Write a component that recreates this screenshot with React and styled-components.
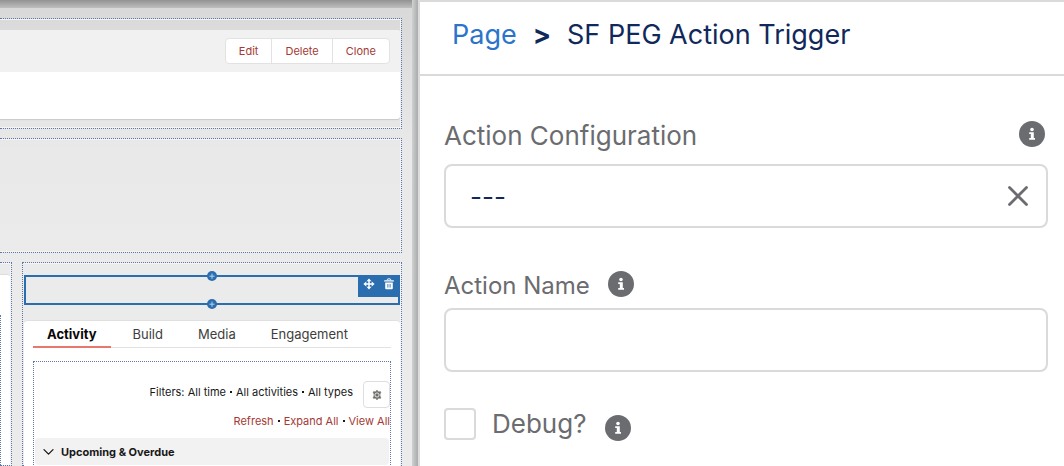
import React from "react";
import styled, { createGlobalStyle, css } from "styled-components";

const GlobalStyle = createGlobalStyle`
  *, *::before, *::after { box-sizing: border-box; }
  body { margin: 0; background: #fff; }
  body, button, input { font-family: Inter, "Liberation Sans", sans-serif; }
  button { margin: 0; padding: 0; border: 0; background: none; cursor: pointer; }
`;

const Builder = styled.div`
  display: grid;
  grid-template-columns: minmax(0, 420fr) minmax(0, 644fr);
  height: 100vh;
  overflow: hidden;
`;

/* ---------- Canvas ---------- */

const Canvas = styled.main`
  display: flex;
  flex-direction: column;
  gap: 9px;
  min-width: 0;
  overflow: hidden;
  padding: 18px 16px 0 0;
  border-right: 2px solid #dcdcdc;
  background:
    linear-gradient(to right, #d0d0d1, #a9abad) right / 6px 100% no-repeat,
    linear-gradient(to bottom, #929294, #bfbfc0) top / 100% 8px no-repeat,
    linear-gradient(to bottom, #d8d8d8, #e9e9e9 150px, #ebebeb 260px);
`;

const Region = styled.section`
  border: 1px dotted #5f78a8;
  box-shadow: inset -1px 0 #f4f4f4, inset 0 1px #f4f4f4, inset 0 -1px #f4f4f4;
  padding: ${(p) => p.$padding || "1px"};
  min-width: 0;
  ${(p) => p.$bleedLeft && css`border-left: 0;`}
  ${(p) => p.$minHeight && css`min-height: ${p.$minHeight};`}
  ${(p) => p.$grow && css`flex: 1; display: flex; flex-direction: column;`}
`;

const RecordCard = styled.article`
  border-radius: 0 3px 3px 0;
  background: #fff;
  box-shadow: 0 1px 1px #c9c9c9;
  overflow: hidden;
  min-height: 89px;
`;

const RecordHeader = styled.header`
  display: flex;
  justify-content: flex-end;
  padding: 8px 10px;
  background: #f1f1f1;
`;

const ButtonGroup = styled.div`
  display: flex;
  border: 1px solid #e2e2e2;
  border-radius: 4px;
  background: #fff;
`;

const GroupButton = styled.button`
  height: 24px;
  padding: 0 13px;
  color: #a43a35;
  font-size: 11px;
  line-height: 16px;
  & + & { border-left: 1px solid #e2e2e2; }
`;

const Columns = styled.div`
  display: flex;
  flex: 1;
  gap: 10px;
  min-height: 0;
`;

const SideRegion = styled(Region)`
  flex: 0 0 12px;
  display: flex;
`;

const SideCard = styled.div`
  flex: 1;
  border-radius: 0 3px 0 0;
  border-top: 1px solid #dedede;
  padding-top: 40px;
  background: #fff;
`;

const SideInner = styled.div`
  width: 1px;
  height: 100%;
  border-left: 1px dotted #5f78a8;
`;

const Selected = styled.div`
  position: relative;
  display: flex;
  flex: none;
  justify-content: flex-end;
  height: 30px;
  margin-bottom: 15px;
  border: 2px solid #2a6eb0;
`;

const AddButton = styled.button`
  position: absolute;
  left: 50%;
  ${(p) => p.$edge}: -6px;
  display: flex;
  width: 10px;
  height: 10px;
  margin-left: -5px;
  border-radius: 50%;
  background: #2a6eb0;
`;

const ComponentTools = styled.div`
  display: flex;
  align-items: flex-start;
  justify-content: space-between;
  width: 40px;
  height: 20px;
  padding: 1px 3px 0 5px;
  background: #2a6eb0;
  & button { display: flex; }
`;

const TabsCard = styled.div`
  border-top: 1px solid #e0e0e0;
  border-radius: 4px 4px 0 0;
  background: #fff;
  padding: 0 9px;
  flex: 1;
`;

const TabList = styled.div`
  display: flex;
  border-bottom: 1px solid #e2e2e2;
`;

const Tab = styled.button`
  height: 27px;
  margin-bottom: -1px;
  padding: 0 ${(p) => (p.$active ? "14px" : "0")};
  margin-right: ${(p) => (p.$active ? "22px" : "35px")};
  border-bottom: 2px solid ${(p) => (p.$active ? "#e6786c" : "transparent")};
  color: ${(p) => (p.$active ? "#080707" : "#3e3e3c")};
  font-size: 13px;
  font-weight: ${(p) => (p.$active ? 700 : 400)};
  white-space: nowrap;
`;

const ActivityRegion = styled.div`
  margin-top: 13px;
  border: 1px dotted #5f78a8;
  padding: 19px 0 1px 1px;
`;

const FilterRow = styled.div`
  display: flex;
  align-items: flex-start;
  justify-content: flex-end;
  gap: 10px;
  white-space: nowrap;
  color: #181818;
  font-size: 11px;
  line-height: 22px;
`;

const FilterList = styled.ul`
  display: flex;
  margin: 0;
  padding: 0;
  list-style: none;
`;

const Dot = styled.span`
  align-self: center;
  flex: none;
  width: 2px;
  height: 2px;
  margin: 0 4px;
  background: #181818;
`;

const Filter = styled.li`
  display: flex;
`;

const GearButton = styled.button`
  display: flex;
  align-items: center;
  justify-content: center;
  width: 27px;
  height: 27px;
  border: 1px solid #dedede;
  border-radius: 4px;
`;

const LinkRow = styled.nav`
  display: flex;
  justify-content: flex-end;
  margin-top: 5px;
  font-size: 11px;
  line-height: 16px;
  white-space: nowrap;
`;

const ActionLink = styled.a`
  color: #a43a35;
  text-decoration: none;
`;

const SectionToggle = styled.button`
  display: flex;
  align-items: center;
  gap: 7px;
  width: calc(100% - 1px);
  height: 27px;
  margin-top: 9px;
  padding: 0 8px;
  border-radius: 4px;
  background: #f2f2f2;
  color: #181818;
  font-size: 11px;
  font-weight: 700;
`;

/* ---------- Property panel ---------- */

const Panel = styled.aside`
  min-width: 0;
  border-top: 2px solid #dadada;
  background: #fff;
`;

const Breadcrumb = styled.header`
  display: flex;
  align-items: center;
  gap: 16px;
  height: 74px;
  padding: 0 32px 6px;
  border-bottom: 2px solid #dadada;
  color: #10295a;
  font-size: 27px;
  line-height: 32px;
  white-space: nowrap;
`;

const PageLink = styled.a`
  color: #2b74cb;
  text-decoration: none;
`;

const Chevron = styled.span`
  font-weight: 700;
`;

const Title = styled.h1`
  margin: 0;
  font-size: inherit;
  font-weight: 400;
`;

const Form = styled.form`
  padding: 40px 16px 0 24px;
`;

const Label = styled.label`
  color: #6b6c70;
  font-size: ${(p) => p.$size || "26px"};
  line-height: 32px;
  white-space: nowrap;
`;

const LabelRow = styled.div`
  display: flex;
  align-items: center;
  justify-content: ${(p) => (p.$spread ? "space-between" : "flex-start")};
  gap: 18px;
  height: 36px;
  padding-right: 3px;
  margin-bottom: ${(p) => p.$gap};
  & > ${Label} { padding-top: 3px; }
`;

const InfoButton = styled.button`
  display: flex;
  flex: none;
`;

const Field = styled.div`
  display: flex;
  align-items: center;
  height: 64px;
  padding: 0 18px 0 24px;
  border: 2px solid #dadada;
  border-radius: 8px;
  & + ${LabelRow} { margin-top: 38px; }
  & button { display: flex; }
`;

const TextInput = styled.input`
  flex: 1;
  min-width: 0;
  height: 100%;
  padding: 0;
  border: 0;
  outline: 0;
  background: none;
  color: #10295a;
  font-size: 26px;
`;

const CheckRow = styled.div`
  display: flex;
  align-items: flex-start;
  margin-top: 36px;
`;

const Checkbox = styled.input`
  appearance: none;
  width: 32px;
  height: 32px;
  margin: 0 16px 0 0;
  border: 2px solid #dadada;
  border-radius: 4px;
  background: #fff;
`;

const CheckInfo = styled(InfoButton)`
  margin: 7px 0 0 19px;
`;

/* ---------- Icons ---------- */

const InfoIcon = () => (
  <svg width="26" height="26" viewBox="0 0 26 26" aria-hidden="true">
    <circle cx="13" cy="13" r="13" fill="#6b6c70" />
    <circle cx="13" cy="8.5" r="1.8" fill="#fff" />
    <path d="M10.2 11.3h4.6v5.8h1.2v1.7h-5.8v-1.7h1.600v-4.100h-1.600z" fill="#fff" />
  </svg>
);

const CloseIcon = () => (
  <svg width="20" height="20" viewBox="0 0 20 20" aria-hidden="true">
    <path d="M1.5 1.5l17 17M18.5 1.5l-17 17" stroke="#6b6c70" strokeWidth="2.8" strokeLinecap="round" />
  </svg>
);

const PlusIcon = () => (
  <svg width="10" height="10" viewBox="0 0 10 10" aria-hidden="true">
    <path d="M5 2.6v5.2M2.4 5.2h5.2" stroke="#b9d0e8" strokeWidth="1" />
  </svg>
);

const MoveIcon = () => (
  <svg width="12" height="12" viewBox="0 0 12 12" aria-hidden="true">
    <path d="M6 2v8M2 6h8" stroke="#fff" strokeWidth="1.5" />
    <path d="M6 .4l2.500 2.900H3.500zM6 11.600l2.500-2.900H3.500zM.4 6l2.900-2.500v5zM11.600 6L8.700 3.500v5z" fill="#fff" />
  </svg>
);

const TrashIcon = () => (
  <svg width="12" height="12" viewBox="0 0 12 12" aria-hidden="true">
    <path d="M4.4 2.2V1.4q0-.5.5-.5h2.2q.5 0 .5.5v.8" fill="none" stroke="#fff" strokeWidth="1" />
    <path d="M1.6 2.3h8.8q.5 0 .5.6v.7H1.1v-.7q0-.6.5-.6z" fill="#fff" />
    <path d="M2.2 4.5h7.6v5.7q0 1.100-1.100 1.100H3.300q-1.100 0-1.100-1.100z" fill="#fff" />
    <path d="M4.900 6v3.600M7.100 6v3.600" stroke="#2a6eb0" strokeWidth=".9" />
  </svg>
);

const GearIcon = () => (
  <svg width="12" height="12" viewBox="0 0 12 12" aria-hidden="true">
    <path
      d="M6 1.200l1.300 1.700 2.300-.1.200.3-.9 1.900v2l.9 1.900-.2.300-2.300-.1L6 10.800 4.700 9.100l-2.300.1-.2-.3.9-1.900V5l-.9-1.900.2-.3 2.300.1z"
      fill="#706e6b"
      stroke="#706e6b"
      strokeWidth=".8"
      strokeLinejoin="round"
    />
    <circle cx="6" cy="6" r="2.100" fill="none" stroke="#fff" strokeWidth=".8" />
  </svg>
);

const ChevronIcon = () => (
  <svg width="11" height="8" viewBox="0 0 11 8" aria-hidden="true">
    <path d="M1 1.6l4.5 4.5L10 1.6" fill="none" stroke="#181818" strokeWidth="1.3" strokeLinecap="round" strokeLinejoin="round" />
  </svg>
);

const TABS = ["Activity", "Build", "Media", "Engagement"];
const FILTERS = ["Filters: All time", "All activities", "All types"];

export default function App() {
  return (
    <>
      <GlobalStyle />
      <Builder>
        <Canvas>
          <Region $bleedLeft $padding="11px 1px 9px 0">
            <RecordCard>
              <RecordHeader>
                <ButtonGroup>
                  <GroupButton type="button">Edit</GroupButton>
                  <GroupButton type="button">Delete</GroupButton>
                  <GroupButton type="button">Clone</GroupButton>
                </ButtonGroup>
              </RecordHeader>
            </RecordCard>
          </Region>
          <Region $bleedLeft $minHeight="115px" />
          <Columns>
            <SideRegion $bleedLeft $padding="11px 1px 0 0">
              <SideCard>
                <SideInner />
              </SideCard>
            </SideRegion>
            <Region $grow $padding="12px 1px 0">
              <Selected>
                <AddButton type="button" $edge="top" aria-label="Add component before">
                  <PlusIcon />
                </AddButton>
                <ComponentTools>
                  <button type="button" aria-label="Move"><MoveIcon /></button>
                  <button type="button" aria-label="Delete component"><TrashIcon /></button>
                </ComponentTools>
                <AddButton type="button" $edge="bottom" aria-label="Add component after">
                  <PlusIcon />
                </AddButton>
              </Selected>
              <TabsCard>
                <TabList role="tablist">
                  {TABS.map((name, i) => (
                    <Tab key={name} type="button" role="tab" aria-selected={i === 0} $active={i === 0}>
                      {name}
                    </Tab>
                  ))}
                </TabList>
                <ActivityRegion>
                  <FilterRow>
                    <FilterList>
                      {FILTERS.map((name, i) => (
                        <Filter key={name}>
                          {i > 0 && <Dot />}
                          {name}
                        </Filter>
                      ))}
                    </FilterList>
                    <GearButton type="button" aria-label="Filter settings"><GearIcon /></GearButton>
                  </FilterRow>
                  <LinkRow>
                    <ActionLink href="#refresh">Refresh</ActionLink>
                    <Dot />
                    <ActionLink href="#expand">Expand All</ActionLink>
                    <Dot />
                    <ActionLink href="#view">View All</ActionLink>
                  </LinkRow>
                  <SectionToggle type="button" aria-expanded="true">
                    <ChevronIcon />
                    Upcoming &amp; Overdue
                  </SectionToggle>
                </ActivityRegion>
              </TabsCard>
            </Region>
          </Columns>
        </Canvas>

        <Panel>
          <Breadcrumb>
            <PageLink href="#page">Page</PageLink>
            <Chevron>&gt;</Chevron>
            <Title>SF PEG Action Trigger</Title>
          </Breadcrumb>
          <Form>
            <LabelRow $spread $gap="12px">
              <Label htmlFor="configuration">Action Configuration</Label>
              <InfoButton type="button" aria-label="About action configuration"><InfoIcon /></InfoButton>
            </LabelRow>
            <Field>
              <TextInput id="configuration" type="text" defaultValue="---" />
              <button type="button" aria-label="Clear"><CloseIcon /></button>
            </Field>
            <LabelRow $gap="6px">
              <Label htmlFor="name" $size="24px">Action Name</Label>
              <InfoButton type="button" aria-label="About action name"><InfoIcon /></InfoButton>
            </LabelRow>
            <Field>
              <TextInput id="name" type="text" />
            </Field>
            <CheckRow>
              <Checkbox id="debug" type="checkbox" />
              <Label htmlFor="debug">Debug?</Label>
              <CheckInfo type="button" aria-label="About debug"><InfoIcon /></CheckInfo>
            </CheckRow>
          </Form>
        </Panel>
      </Builder>
    </>
  );
}
